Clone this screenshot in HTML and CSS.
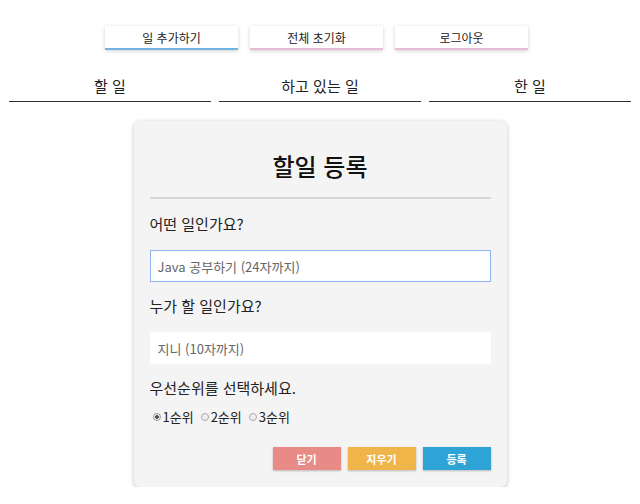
FILE: index.html
```html
<!DOCTYPE html>
<html lang="ko">

<head>
  <meta charset="UTF-8">
  <meta name="viewport" content="width=device-width, initial-scale=1.0">
  <title>할일 관리</title>
  <link rel="stylesheet" href="styles.css">
</head>

<body>
  <div class="top-menu">
    <button class="menu-btn blue">일 추가하기</button>
    <button class="menu-btn pink">전체 초기화</button>
    <button class="menu-btn pink">로그아웃</button>
  </div>

  <div class="columns">
    <div class="column-title">할 일</div>
    <div class="column-title">하고 있는 일</div>
    <div class="column-title">한 일</div>
  </div>

  <div class="modal">
    <h2 class="modal-title">할일 등록</h2>
    <hr class="modal-line">

    <label class="field-label">어떤 일인가요?</label>
    <input class="field-input focused" type="text" placeholder="Java 공부하기 (24자까지)">

    <label class="field-label">누가 할 일인가요?</label>
    <input class="field-input" type="text" placeholder="지니 (10자까지)">

    <label class="field-label">우선순위를 선택하세요.</label>
    <div class="radio-group">
      <label class="radio-item"><input type="radio" name="rank" checked>1순위</label>
      <label class="radio-item"><input type="radio" name="rank">2순위</label>
      <label class="radio-item"><input type="radio" name="rank">3순위</label>
    </div>

    <div class="modal-actions">
      <button class="action-btn red">닫기</button>
      <button class="action-btn yellow">지우기</button>
      <button class="action-btn blue-fill">등록</button>
    </div>
  </div>
</body>

</html>
```

FILE: styles.css
```css
* {
  margin: 0;
  padding: 0;
  box-sizing: border-box;
}

body {
  font-family: 'Noto Sans CJK KR', 'Noto Sans', sans-serif;
  background: #fff;
  color: #222;
  padding: 26px 9px 0;
}

.top-menu {
  display: flex;
  justify-content: center;
  gap: 12px;
  padding-right: 7px;
}

.menu-btn {
  width: 133px;
  height: 24px;
  background: #fff;
  border: none;
  font-family: inherit;
  font-size: 12px;
  color: #222;
  box-shadow: 0 1px 4px rgba(0, 0, 0, 0.18);
}

.menu-btn.blue {
  border-bottom: 2px solid #6fb3de;
}

.menu-btn.pink {
  border-bottom: 2px solid #e8bcd8;
}

.columns {
  display: flex;
  gap: 8px;
  margin-top: 25px;
}

.column-title {
  flex: 1;
  text-align: center;
  font-size: 15px;
  line-height: 22px;
  padding-bottom: 4px;
  border-bottom: 1.5px solid #333;
}

.modal {
  width: 373px;
  margin: 19px auto 0;
  background: #f4f4f4;
  border-radius: 6px;
  box-shadow: 0 1px 4px rgba(0, 0, 0, 0.25);
  padding: 26px 16px 17px;
}

.modal-title {
  text-align: center;
  font-size: 24px;
  font-weight: 500;
  line-height: 38px;
  color: #111;
}

.modal-line {
  border: none;
  border-top: 2px solid #d6d6d6;
  margin: 12px 0 11px;
}

.field-label {
  display: block;
  font-size: 15px;
  line-height: 28px;
  color: #222;
  margin-bottom: 12px;
}

.field-input {
  display: block;
  width: 100%;
  height: 32px;
  border: 1px solid #fff;
  background: #fff;
  padding: 0 7px;
  font-family: inherit;
  font-size: 13px;
  margin-bottom: 10px;
  outline: none;
}

.field-input.focused {
  border-color: #8fb3ee;
}

.field-input::placeholder {
  color: #666;
}

.radio-group {
  display: flex;
  gap: 4px;
  font-size: 13px;
  line-height: 18px;
  margin-top: -6px;
}

.radio-item {
  display: flex;
  align-items: center;
}

.radio-item input {
  appearance: none;
  width: 8px;
  height: 8px;
  margin: 0 2px 0 3px;
  border: 1px solid #aaa;
  border-radius: 50%;
  background: #eee;
}

.radio-item input:checked {
  background: radial-gradient(circle, #555 0 1.6px, #eee 2px);
  border-color: #999;
}

.modal-actions {
  display: flex;
  justify-content: flex-end;
  gap: 7px;
  margin-top: 21px;
}

.action-btn {
  width: 68px;
  height: 23px;
  border: none;
  color: #fff;
  font-family: inherit;
  font-size: 11px;
  font-weight: 700;
  box-shadow: 0 1px 2px rgba(0, 0, 0, 0.25);
}

.action-btn.red {
  background: #e88b87;
}

.action-btn.yellow {
  background: #f0b549;
}

.action-btn.blue-fill {
  background: #2ea3d5;
}
```
